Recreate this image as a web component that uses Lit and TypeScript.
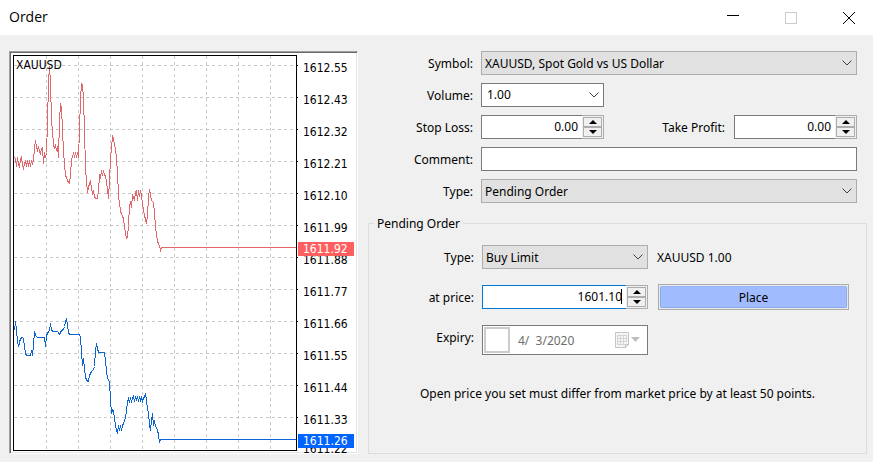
import { LitElement, html, svg, css } from "lit";
import { customElement } from "lit/decorators.js";

const PLOT = { x: 13, y: 55, width: 284, height: 396 };

const ASK =
  "14,157 15,158 16,166 17,157 18,163 19,167 20,159 21,157 22,163 23,169 24,163 25,160 26,166 27,160 28,166 29,160 30,166 31,160 32,163 33,160 34,147 35,140 36,146 37,150 38,147 39,150 40,154 41,148 42,147 43,163 44,152 45,157 46,152 47,123 48,82 49,66 50,82 51,120 52,130 53,144 54,148 55,144 56,150 57,146 58,157 59,120 60,103 61,107 62,130 63,150 64,164 65,175 66,177 67,180 68,182 69,183 70,175 71,158 72,157 73,152 74,157 75,152 76,157 77,152 78,157 79,130 80,98 81,83 82,84 83,98 84,130 85,167 86,181 87,192 88,187 89,183 90,181 91,187 92,193 93,191 94,196 95,198 97,198 98,190 99,175 100,177 101,170 102,175 103,170 104,175 105,175 106,182 107,189 108,198 109,180 110,157 111,148 112,135 113,138 114,144 115,148 116,158 117,172 118,195 119,203 120,210 121,214 122,215 123,219 124,226 125,233 126,238 127,237 128,225 129,205 130,202 131,207 132,195 133,197 134,200 135,191 136,190 137,200 138,190 139,196 140,190 141,195 142,203 143,210 144,215 145,219 146,223 147,215 148,197 149,189 150,194 151,200 152,201 153,202 154,212 155,226 156,234 157,240 158,244 159,245 160,250 161,247 296,247";

const BID =
  "14,330 15,321 16,330 17,340 18,346 19,342 20,338 22,337 23,338 24,346 25,353 26,355 30,355 31,350 32,355 33,344 34,331 35,335 37,337 44,337 45,346 46,336 47,332 49,331 50,323 51,329 52,331 57,331 59,334 61,330 63,329 64,326 65,322 66,318 67,325 68,332 69,334 79,334 80,337 81,352 82,365 83,358 84,369 85,376 86,380 88,381 89,375 91,371 93,369 94,366 95,350 96,343 97,348 98,352 104,352 105,360 106,370 107,378 109,381 110,400 111,413 112,409 113,410 114,418 115,425 116,430 117,433 118,425 119,430 120,425 121,430 122,425 123,423 125,417 126,410 127,402 128,398 129,401 130,398 131,401 132,398 133,396 134,401 135,396 136,400 137,396 138,401 139,396 140,400 141,397 142,401 143,398 144,396 145,393 146,400 147,408 148,412 149,425 150,430 151,420 152,413 153,425 154,420 155,426 156,427 157,430 158,434 159,442 160,439 296,439";

const COLUMNS = [46, 78, 110, 142, 174, 206, 238, 270];
const LEVELS = [65, 97, 129, 161, 193, 225, 257, 289, 321, 353, 385, 417];
const PRICES = [
  "1612.55", "1612.43", "1612.32", "1612.21", "1612.10", "1611.99",
  "1611.88", "1611.77", "1611.66", "1611.55", "1611.44", "1611.33",
];

const percent = (y: number) => `top:${((y - PLOT.y) / PLOT.height) * 100}%`;

@customElement("tick-chart")
class TickChart extends LitElement {
  static styles = css`
    :host {
      display: flex;
      box-sizing: border-box;
      min-width: 0;
      padding: 3px 2px 2px 3px;
      background: #fff;
      border: 1px solid;
      border-color: #a0a0a0 #fff #fff #a0a0a0;
      box-shadow: inset 1px 1px #696969, inset -1px -1px #e3e3e3;
      color: #000;
      font: 12px/14px "DejaVu Sans Condensed", "DejaVu Sans", sans-serif;
    }
    .plot {
      position: relative;
      flex: 1;
      min-width: 0;
      min-height: 396px;
    }
    .lines {
      position: absolute;
      inset: 0;
      width: 100%;
      height: 100%;
      shape-rendering: crispEdges;
    }
    .lines * {
      fill: none;
      stroke-width: 1px;
      vector-effect: non-scaling-stroke;
    }
    .grid {
      stroke: #c8c8c8;
      stroke-dasharray: 3 3;
    }
    .ask { stroke: #e0686c; }
    .bid { stroke: #0a64d2; }
    .frame { stroke: #000; }
    .name {
      position: absolute;
      left: 3px;
      top: 3px;
    }
    .axis {
      position: relative;
      flex: 0 0 58px;
    }
    .price, .tag {
      position: absolute;
      left: 6px;
      margin-top: -4px;
    }
    .tag {
      left: 1px;
      width: 56px;
      box-sizing: border-box;
      padding-left: 5px;
      margin-top: -5px;
      color: #fff;
    }
    .tag.sell { background: #ff5f5f; }
    .tag.buy { background: #0064ff; }
    .tick {
      position: absolute;
      left: 0;
      width: 1px;
      height: 1px;
      background: #000;
    }
  `;

  render() {
    return html`
      <div class="plot">
        <svg class="lines" viewBox="${PLOT.x} ${PLOT.y} ${PLOT.width} ${PLOT.height}"
          preserveAspectRatio="none" role="img" aria-label="XAUUSD tick chart">
          ${COLUMNS.map((x) => svg`<line class="grid" x1=${x + 0.5} y1="56" x2=${x + 0.5} y2="450"/>`)}
          ${LEVELS.map((y) => svg`<line class="grid" x1="14" y1=${y + 0.5} x2="296" y2=${y + 0.5}/>`)}
          <polyline class="ask" transform="translate(0.5 0.5)" points=${ASK}/>
          <polyline class="bid" transform="translate(0.5 0.5)" points=${BID}/>
          <rect class="frame" x="13.5" y="55.5" width="283" height="395"/>
        </svg>
        <span class="name">XAUUSD</span>
      </div>
      <div class="axis">
        ${LEVELS.map((y, i) => html`
          <i class="tick" style=${percent(y)}></i>
          <span class="price" style=${percent(y)}>${PRICES[i]}</span>`)}
        <span class="price" style=${percent(446)}>1611.22</span>
        <span class="tag sell" style=${percent(247)}>1611.92</span>
        <span class="tag buy" style=${percent(439)}>1611.26</span>
      </div>
    `;
  }
}

const comboBox = (id: string, value: string, look = "") => html`
  <div class="combo ${look}">
    <select class="select" id=${id}><option>${value}</option></select>
    <svg class="chevron" width="10" height="6" viewBox="0 0 10 6" fill="none" stroke="#404040">
      <path d="M0.5 0.5 L5 5 L9.5 0.5"/>
    </svg>
  </div>`;

const spinBox = (id: string, value: string, look = "") => html`
  <div class="spinner ${look}">
    <div class="entry">
      <input class="number" id=${id} type="text" .value=${value}>
      <span class="caret"></span>
    </div>
    <div class="steps">
      <button class="step" type="button" aria-label="Increase">
        <svg width="8" height="4" viewBox="0 0 8 4"><path d="M0 4 L4 0 L8 4Z"/></svg>
      </button>
      <button class="step" type="button" aria-label="Decrease">
        <svg width="8" height="4" viewBox="0 0 8 4"><path d="M0 0 L4 4 L8 0Z"/></svg>
      </button>
    </div>
  </div>`;

@customElement("app-root")
class AppRoot extends LitElement {
  static styles = css`
    :host {
      display: flex;
      flex-direction: column;
      min-height: 100vh;
      background: #f0f0f0;
      color: #000;
      font: 12px/16px "Noto Sans", sans-serif;
    }
    * { box-sizing: border-box; }
    input, select, button {
      margin: 0;
      border-radius: 0;
      outline: none;
      font: inherit;
      color: #000;
    }
    .titlebar {
      display: flex;
      align-items: center;
      height: 35px;
      padding-left: 9px;
      background: #fff;
    }
    .title {
      flex: 1;
      margin: 0;
      padding-bottom: 2px;
      font: 14px/20px "Open Sans", sans-serif;
    }
    .controls { display: flex; gap: 10px; }
    .control {
      display: grid;
      place-items: center;
      width: 48px;
      height: 32px;
      padding: 0;
      border: 0;
      background: none;
    }
    .body {
      flex: 1;
      display: grid;
      grid-template-columns: 349fr 499fr;
      gap: 10px;
      padding: 16px 6px 8px 9px;
    }
    .form {
      display: flex;
      flex-direction: column;
      min-width: 0;
    }
    .rows {
      display: grid;
      grid-template-columns: 105px minmax(0, 1fr);
      gap: 8px;
      padding-right: 10px;
    }
    .label, .summary {
      height: 24px;
      padding-top: 1px;
      line-height: 24px;
    }
    .label { text-align: right; }
    .narrow { width: 123px; }
    .pair {
      display: flex;
      justify-content: space-between;
    }
    .second { display: flex; gap: 9px; }

    .combo { display: grid; align-items: center; }
    .combo > * { grid-area: 1 / 1; }
    .select {
      appearance: none;
      width: 100%;
      height: 24px;
      padding: 2px 24px 0 3px;
      background: #e1e1e1;
      border: 1px solid #adadad;
    }
    .light .select {
      padding-top: 0;
      padding-left: 5px;
      background: #fff;
      border-color: #7a7a7a;
    }
    .chevron {
      justify-self: end;
      margin-right: 5px;
      pointer-events: none;
    }

    .spinner { display: flex; height: 24px; }
    .entry { position: relative; flex: 1; min-width: 0; }
    .number {
      display: block;
      width: 100%;
      height: 24px;
      padding: 0 4px 1px;
      text-align: right;
      background: #fff;
      border: 1px solid #7a7a7a;
      border-right: 0;
    }
    .active .number { border-color: #0078d7; }
    .caret {
      display: none;
      position: absolute;
      right: 4px;
      top: 4px;
      width: 1px;
      height: 15px;
      background: #000;
    }
    .active .caret { display: block; }
    .steps {
      display: grid;
      grid-template-rows: 1fr 1fr;
      width: 22px;
      padding: 1px;
      border: 1px solid #adadad;
      border-left: 0;
    }
    .step {
      display: grid;
      place-items: center;
      min-height: 0;
      padding: 0;
      background: #f0f0f0;
      border: 1px solid #adadad;
    }

    .comment {
      width: 100%;
      height: 24px;
      padding: 0 4px;
      background: #fff;
      border: 1px solid #7a7a7a;
    }
    .group {
      flex: 1;
      min-width: 0;
      margin: 11px 0 0;
      padding: 13px 17px 0 0;
      border: 1px solid #dcdcdc;
    }
    .legend {
      margin-left: 5px;
      padding: 2px 3px 0;
    }
    .order {
      display: grid;
      grid-template-columns: 105px 166px minmax(0, 1fr);
      column-gap: 8px;
      row-gap: 16px;
    }
    .summary { padding-left: 1px; }
    .place {
      height: 26px;
      margin: -1px 0 -1px 2px;
      padding: 1px;
      background: #e8e8e8;
      border: 1px solid #adadad;
    }
    .face {
      display: block;
      height: 22px;
      padding-top: 1px;
      line-height: 20px;
      background: #a0bcff;
      border: 1px solid #8eabf0;
      border-top-color: #98b4fa;
      border-radius: 2px;
    }

    .datebox {
      display: flex;
      align-items: center;
      height: 30px;
      padding: 0 6px 0 1px;
      background: #fff;
      border: 1px solid #7a7a7a;
    }
    .check {
      appearance: none;
      flex: none;
      width: 26px;
      height: 26px;
      background: #fff;
      border: 2px solid #ccc;
    }
    .date {
      flex: 1;
      min-width: 0;
      padding: 1px 0 0 8px;
      border: 0;
      background: none;
      color: #6d6d6d;
    }
    .pick {
      flex: none;
      padding: 0;
      border: 0;
      background: none;
    }
    .pick svg, .step svg { display: block; }
    .hint {
      margin: 31px -17px 0 0;
      text-align: center;
    }
  `;

  render() {
    return html`
      <header class="titlebar">
        <h1 class="title">Order</h1>
        <div class="controls">
          <button class="control" type="button" aria-label="Minimize">
            <svg width="12" height="12" viewBox="0 0 12 12"><path d="M0 3.5 H12" stroke="#000"/></svg>
          </button>
          <button class="control" type="button" aria-label="Maximize" disabled>
            <svg width="12" height="12" viewBox="0 0 12 12"><rect x="0.5" y="0.5" width="11" height="11" fill="none" stroke="#ccc"/></svg>
          </button>
          <button class="control" type="button" aria-label="Close">
            <svg width="12" height="12" viewBox="0 0 12 12"><path d="M0 0 L12 12 M12 0 L0 12" stroke="#000"/></svg>
          </button>
        </div>
      </header>
      <main class="body">
        <tick-chart></tick-chart>
        <form class="form">
          <div class="rows">
            <label class="label" for="symbol">Symbol:</label>
            ${comboBox("symbol", "XAUUSD, Spot Gold vs US Dollar")}
            <label class="label" for="volume">Volume:</label>
            ${comboBox("volume", "1.00", "narrow light")}
            <label class="label" for="stop-loss">Stop Loss:</label>
            <div class="pair">
              ${spinBox("stop-loss", "0.00", "narrow")}
              <div class="second">
                <label class="label" for="take-profit">Take Profit:</label>
                ${spinBox("take-profit", "0.00", "narrow")}
              </div>
            </div>
            <label class="label" for="comment">Comment:</label>
            <input class="comment" id="comment" type="text">
            <label class="label" for="type">Type:</label>
            ${comboBox("type", "Pending Order")}
          </div>
          <fieldset class="group">
            <legend class="legend">Pending Order</legend>
            <div class="order">
              <label class="label" for="pending-type">Type:</label>
              ${comboBox("pending-type", "Buy Limit")}
              <span class="summary">XAUUSD 1.00</span>
              <label class="label" for="price">at price:</label>
              ${spinBox("price", "1601.10", "active")}
              <button class="place" type="button"><span class="face">Place</span></button>
              <label class="label" for="expiry">Expiry:</label>
              <div class="datebox">
                <input class="check" type="checkbox" aria-label="Set expiry" disabled>
                <input class="date" id="expiry" type="text" disabled .value=${"4/  3/2020"}>
                <button class="pick" type="button" aria-label="Choose date" disabled>
                  <svg width="26" height="16" viewBox="0 0 26 16">
                    <path d="M0.5 0.5 H13.5 V12.5 L10.5 15.5 H0.5Z" fill="#f6f6f6" stroke="#c4c4c4"/>
                    <path d="M2.5 3.5 H12 M2.5 6.5 H12 M2.5 9.5 H12 M2.5 12.5 H10 M2.5 3 V13 M5.5 3 V13 M8.5 3 V13 M11.5 3 V10" stroke="#d4d4d4" fill="none"/>
                    <path d="M10.5 15.5 V12.5 H13.5Z" stroke="#c4c4c4" fill="#fff"/>
                    <path d="M16 5 H25 L20.5 10Z" fill="#bdbdbd"/>
                  </svg>
                </button>
              </div>
            </div>
            <p class="hint">Open price you set must differ from market price by at least 50 points.</p>
          </fieldset>
        </form>
      </main>
    `;
  }
}
